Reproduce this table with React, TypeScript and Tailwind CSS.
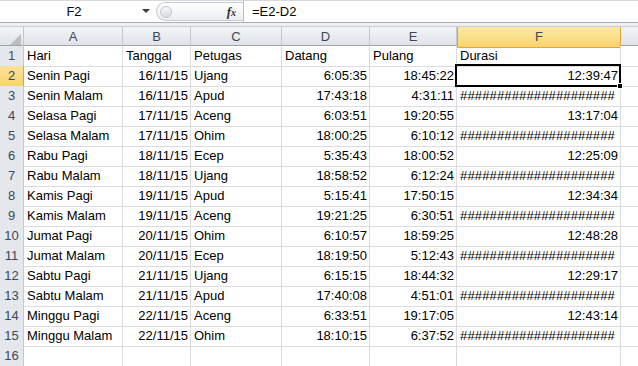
const cols = ['A', 'B', 'C', 'D', 'E', 'F']

const H = '#####################'

const rows: string[][] = [
  ['Hari', 'Tanggal', 'Petugas', 'Datang', 'Pulang', 'Durasi'],
  ['Senin Pagi', '16/11/15', 'Ujang', '6:05:35', '18:45:22', '12:39:47'],
  ['Senin Malam', '16/11/15', 'Apud', '17:43:18', '4:31:11', H],
  ['Selasa Pagi', '17/11/15', 'Aceng', '6:03:51', '19:20:55', '13:17:04'],
  ['Selasa Malam', '17/11/15', 'Ohim', '18:00:25', '6:10:12', H],
  ['Rabu Pagi', '18/11/15', 'Ecep', '5:35:43', '18:00:52', '12:25:09'],
  ['Rabu Malam', '18/11/15', 'Ujang', '18:58:52', '6:12:24', H],
  ['Kamis Pagi', '19/11/15', 'Apud', '5:15:41', '17:50:15', '12:34:34'],
  ['Kamis Malam', '19/11/15', 'Aceng', '19:21:25', '6:30:51', H],
  ['Jumat Pagi', '20/11/15', 'Ohim', '6:10:57', '18:59:25', '12:48:28'],
  ['Jumat Malam', '20/11/15', 'Ecep', '18:19:50', '5:12:43', H],
  ['Sabtu Pagi', '21/11/15', 'Ujang', '6:15:15', '18:44:32', '12:29:17'],
  ['Sabtu Malam', '21/11/15', 'Apud', '17:40:08', '4:51:01', H],
  ['Minggu Pagi', '22/11/15', 'Aceng', '6:33:51', '19:17:05', '12:43:14'],
  ['Minggu Malam', '22/11/15', 'Ohim', '18:10:15', '6:37:52', H],
  ['', '', '', '', '', ''],
]

const gridCols = 'grid grid-cols-[24px_99px_68px_91px_88px_87px_164px_1fr]'

export default function App() {
  return (
    <div className="w-[638px] h-[366px] overflow-hidden bg-white font-['Liberation_Sans',Arial,sans-serif] text-[13px] text-black">
      {/* formula bar */}
      <div className="flex h-[23px] items-stretch border-t border-[#d5d9de] border-b border-b-[#a9aeb5]">
        <div className="relative w-[156px] flex items-center justify-center pr-2">
          <span>F2</span>
          <span className="absolute right-[6px] top-[8px] w-0 h-0 border-l-[4px] border-r-[4px] border-t-[4px] border-l-transparent border-r-transparent border-t-[#3c3c3c]" />
        </div>
        <div className="flex w-[87px] items-center rounded-l-full border border-r-0 border-[#c8ccd2] bg-gradient-to-b from-white to-[#eceef1] my-[1px]">
          <span className="ml-[3px] w-[12px] h-[12px] rounded-full border border-[#c3c7cc] bg-gradient-to-b from-[#f7f7f7] to-[#d9dbde]" />
          <span className="ml-auto mr-[7px] font-['Liberation_Serif',serif] italic font-bold text-[13px] text-[#333]">
            f<span className="text-[10px]">x</span>
          </span>
        </div>
        <div className="flex-1 flex items-center border-l border-[#b9bdc3] pl-[8px]">=E2-D2</div>
      </div>
      <div className="h-[4px] bg-[#eef0f3] border-b border-[#c9cdd3]" />

      {/* column headers */}
      <div className={`${gridCols} h-[19px] bg-gradient-to-b from-[#f3f5f7] to-[#dfe3e8] text-[#3b4757] border-b border-[#9ea4ab]`}>
        <div className="flex items-end justify-end border-r border-[#c2c7cd] pr-[2px] pb-[2px]">
          <svg width="11" height="11" viewBox="0 0 11 11">
            <polygon points="11,0 11,11 0,11" fill="#b9bec5" />
          </svg>
        </div>
        {cols.map(c =>
          c === 'F' ? (
            <div key={c} className="flex items-center justify-center bg-gradient-to-b from-[#fdeaa6] to-[#f8d36a] border-x border-[#e2a63c] -mb-px border-b border-b-[#e2a63c]">
              {c}
            </div>
          ) : (
            <div key={c} className="flex items-center justify-center border-r border-[#c2c7cd]">
              {c}
            </div>
          )
        )}
        <div />
      </div>

      {/* rows */}
      {rows.map((r, i) => {
        const n = i + 1
        const sel = n === 2
        return (
          <div key={n} className={`${gridCols} h-[20px]`}>
            <div
              className={`flex items-center justify-center border-r border-b text-[#3b4757] ${
                sel
                  ? 'bg-gradient-to-b from-[#fbe29a] to-[#f7d36a] border-[#e2a63c]'
                  : 'bg-[#e4e8ed] border-[#c5cad0]'
              }`}
            >
              {n}
            </div>
            {r.map((v, j) => {
              const right = j > 0 && j !== 2 && n > 1 && v !== H
              return (
                <div
                  key={j}
                  className={`relative flex items-center whitespace-nowrap border-r border-b border-[#dadcdd] ${
                    right ? 'justify-end pr-[2px]' : 'pl-[3px]'
                  } ${v === H ? 'tracking-[0.15px]' : ''}`}
                >
                  {v}
                  {sel && j === 5 && (
                    <>
                      <span className="absolute -left-[2px] -top-[2px] -right-px -bottom-px border-2 border-black z-10" />
                      <span className="absolute -right-[3px] -bottom-[3px] w-[6px] h-[6px] bg-black border border-white z-20" />
                    </>
                  )}
                </div>
              )
            })}
            <div className="border-b border-[#dadcdd]" />
          </div>
        )
      })}
    </div>
  )
}
